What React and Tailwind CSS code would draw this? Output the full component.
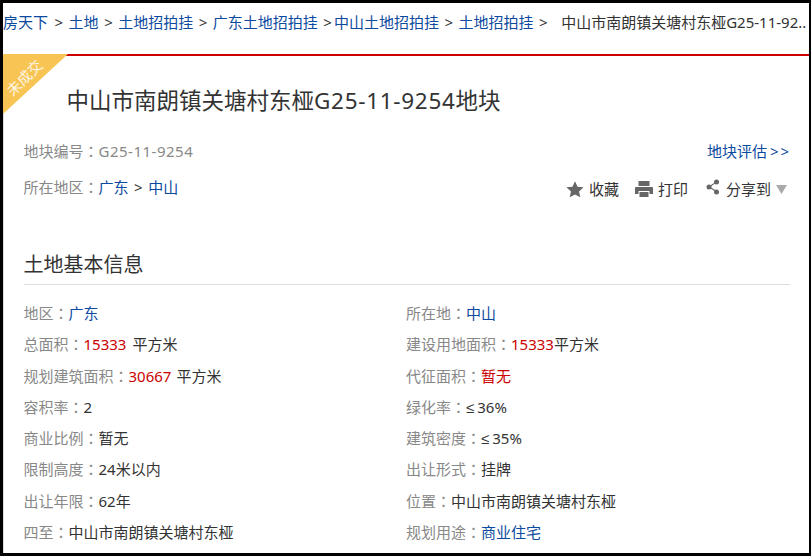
const FONT = "font-['Noto_Sans','Noto_Sans_CJK_SC',sans-serif]";

const LEFT = [
  ['地区', <span className="text-[#0b4a9e]">广东</span>],
  ['总面积', <><span className="text-[#c00] mr-[6px]">15333</span>平方米</>],
  ['规划建筑面积', <><span className="text-[#c00] mr-[5px]">30667</span>平方米</>],
  ['容积率', '2'],
  ['商业比例', '暂无'],
  ['限制高度', '24米以内'],
  ['出让年限', '62年'],
  ['四至', '中山市南朗镇关塘村东桠'],
];

const RIGHT = [
  ['所在地', <span className="text-[#0b4a9e]">中山</span>],
  ['建设用地面积', <><span className="text-[#c00]">15333</span>平方米</>],
  ['代征面积', <span className="text-[#c00]">暂无</span>],
  ['绿化率', <><Lte />36%</>],
  ['建筑密度', <><Lte />35%</>],
  ['出让形式', '挂牌'],
  ['位置', '中山市南朗镇关塘村东桠'],
  ['规划用途', <span className="text-[#0b4a9e]">商业住宅</span>],
];

function Lte() {
  return <span className="font-['Liberation_Sans',sans-serif] mr-[3px]">≤</span>;
}

function Colon() {
  return <span className="font-['Noto_Sans_CJK_TC',sans-serif]">：</span>;
}

function Row({ label, value }) {
  return (
    <div className="h-[31.3px] leading-[31px] whitespace-nowrap">
      <span className="text-[#888]">{label}<Colon /></span>
      <span className="text-[#333]">{value}</span>
    </div>
  );
}

function Sep({ className = 'mx-[5.500px]' }) {
  return <span className={`text-[#333] ${className}`}>&gt;</span>;
}

export default function App() {
  return (
    <div className={`${FONT} w-[811px] h-[556px] overflow-hidden border-[3px] border-r-2 border-black bg-white text-[15px] flex flex-col`}>
      <div className="h-[36px] pt-[8px] leading-[22px] whitespace-nowrap overflow-hidden text-[#0b4a9e]">
        房天下<Sep className="ml-[6.500px] mr-[5.500px]" />土地<Sep />土地招拍挂<Sep />广东土地招拍挂<Sep className="ml-[5.500px] mr-[2px]" />中山土地招拍挂<Sep />土地招拍挂<Sep />
        <span className="text-[#333] ml-[8px]">中山市南朗镇关塘村东桠G25-11-92..</span>
      </div>

      <div className="relative flex-1 border-t-2 border-l border-t-[#c00] border-l-[#ddd] mt-[15px] pl-[19.500px] pr-[19px]">
        <svg className="absolute -left-px -top-[2px]" width="65" height="60" viewBox="0 0 65 60">
          <path d="M0 0H65L0 60Z" fill="#f8c554" />
          <text x="0" y="0" transform="translate(10 43) rotate(-45)" fontSize="14.500" fill="#fff" opacity="0.85">未成交</text>
        </svg>

        <h1 className="pl-[43px] pt-[29px] text-[22.500px] leading-[32px] text-[#333]">
          中山市南朗镇关塘村东桠<span className="tracking-[0.7px]">G25-11-9254</span>地块
        </h1>

        <div className="mt-[23px] flex justify-between leading-[22px]">
          <div className="text-[#888]">地块编号<Colon /><span className="tracking-[0.5px]">G25-11-9254</span></div>
          <div className="text-[#0b4a9e] mr-[2px]">地块评估<span className="ml-[3px] tracking-[-1px]">&gt; &gt;</span></div>
        </div>

        <div className="mt-[14px] flex justify-between leading-[22px]">
          <div className="text-[#888]">
            所在地区<Colon /><span className="text-[#0b4a9e]">广东</span><Sep /><span className="text-[#0b4a9e]">中山</span>
          </div>
          <div className="flex items-center text-[#333] pt-[2px] mr-[3px]">
            <svg width="20" height="19" viewBox="0 0 24 24" fill="#666"><path d="M12 1.500l3.200 7 7.600.8-5.700 5.100 1.600 7.500L12 18.200l-6.700 3.700 1.600-7.500L1.200 9.300l7.600-.8z" /></svg>
            <span className="ml-[4px]">收藏</span>
            <svg className="ml-[15px]" width="20" height="18" viewBox="0 0 19 18" fill="#666"><path d="M4 1h11v5H4zM1.500 7h16a1 1 0 0 1 1 1v6h-3.500v-3H4v3H.5V8a1 1 0 0 1 1-1zM5 12h9v5H5z" /></svg>
            <span className="ml-[4px]">打印</span>
            <svg className="ml-[18px] -mt-[4px]" width="14" height="16" viewBox="0 0 14 16" fill="#666"><circle cx="10.500" cy="3" r="2.500" /><circle cx="3" cy="8" r="2.500" /><circle cx="10.500" cy="13" r="2.500" /><path d="M3 7.300l7-4.600.6.900-7 4.600zM3.600 7.500l7 4.600-.6.900-7-4.600z" /></svg>
            <span className="ml-[6px]">分享到</span>
            <svg className="ml-[5px]" width="11" height="9" viewBox="0 0 11 9" fill="#aaa"><path d="M0 0h11L5.500 9z" /></svg>
          </div>
        </div>

        <h2 className="mt-[51px] h-[34px] border-b border-[#ddd] text-[20px] leading-[28px] text-[#333]">土地基本信息</h2>

        <div className="mt-[12px] grid grid-cols-[382.500px_1fr]">
          <div>{LEFT.map(([l, v]) => <Row key={l} label={l} value={v} />)}</div>
          <div>{RIGHT.map(([l, v]) => <Row key={l} label={l} value={v} />)}</div>
        </div>
      </div>
    </div>
  );
}
